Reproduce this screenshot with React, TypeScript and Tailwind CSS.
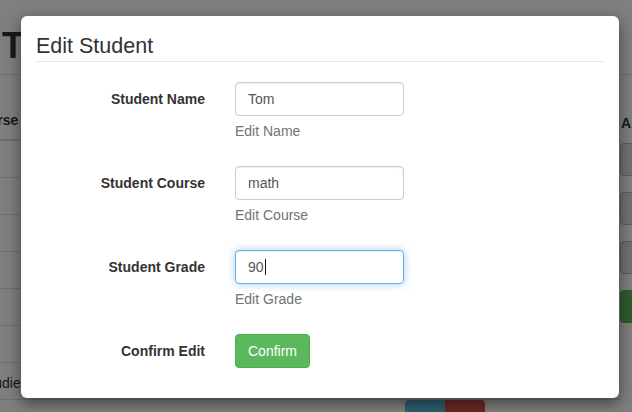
import React from "react";

interface FieldRow {
  label: string;
  value: string;
  help: string;
  focused?: boolean;
}

const fields: FieldRow[] = [
  { label: "Student Name", value: "Tom", help: "Edit Name" },
  { label: "Student Course", value: "math", help: "Edit Course" },
  { label: "Student Grade", value: "90", help: "Edit Grade", focused: true },
];

function FakeInput({ value, focused }: { value: string; focused?: boolean }) {
  return (
    <div
      className={
        focused
          ? "flex h-[34px] items-center rounded-[4px] border border-[#66afe9] bg-white px-[12px] text-[#555] shadow-[inset_0_1px_1px_rgba(0,0,0,0.075),0_0_8px_rgba(102,175,233,0.6)]"
          : "flex h-[34px] items-center rounded-[4px] border border-[#ccc] bg-white px-[12px] text-[#555] shadow-[inset_0_1px_1px_rgba(0,0,0,0.075)]"
      }
    >
      <span>{value}</span>
      {focused && <span className="ml-[1px] inline-block h-[16px] w-px bg-[#111]" />}
    </div>
  );
}

export default function App() {
  return (
    <div className="relative h-[412px] w-[632px] overflow-hidden bg-white font-['Liberation_Sans',Arial,sans-serif] text-[14px] text-[#333]">
      {/* page behind the modal */}
      <div className="flex flex-col">
        <h1 className="pl-[2px] pt-[26px] text-[36px] font-bold leading-[40px]">Top</h1>
        <div className="mt-[8px] border-t border-[#ddd]" />
        <div className="flex">
          <div className="w-[620px] shrink-0">
            <div className="flex h-[66px] items-end border-b-2 border-[#ddd] pb-[9px] font-bold leading-[20px]">
              <span className="ml-[-30px]">Course</span>
            </div>
            <div className="h-[37px] border-b border-[#ddd]" />
            <div className="h-[37px] border-b border-[#ddd]" />
            <div className="h-[37px] border-b border-[#ddd]" />
            <div className="h-[37px] border-b border-[#ddd]" />
            <div className="h-[37px] border-b border-[#ddd]" />
            <div className="h-[37px] border-b border-[#ddd]" />
            <div className="flex h-[37px] items-center border-b border-[#ddd] pt-[4px]">
              <span className="ml-[-19px]">Studies</span>
            </div>
            <div className="flex pl-[405px]">
              <div className="h-[34px] w-[40px] rounded-l-[4px] bg-[#5bc0de]" />
              <div className="h-[34px] w-[40px] rounded-r-[4px] bg-[#d9534f]" />
            </div>
          </div>
          <div className="flex w-[80px] shrink-0 flex-col pt-[38px]">
            <span className="ml-[1px] font-bold leading-[20px]">A</span>
            <div className="mt-[10px] flex flex-col gap-[16px]">
              <div className="h-[33px] rounded-[4px] border border-[#bbb] bg-[#e0e0e0]" />
              <div className="h-[33px] rounded-[4px] border border-[#bbb] bg-[#e0e0e0]" />
              <div className="h-[33px] rounded-[4px] border border-[#bbb] bg-[#e0e0e0]" />
              <div className="h-[33px] rounded-[4px] bg-[#5cb85c]" />
            </div>
          </div>
        </div>
      </div>

      {/* backdrop */}
      <div className="absolute inset-0 bg-black/50" />

      {/* modal */}
      <div className="absolute left-[21px] top-[16px] w-[598px] rounded-[6px] bg-white shadow-[0_5px_15px_rgba(0,0,0,0.5)]">
        <div className="mx-[15px] border-b border-[#e5e5e5] pb-[3px] pt-[18px]">
          <h4 className="text-[21.5px] leading-[24px] text-[#333]">Edit Student</h4>
        </div>
        <div className="flex flex-col gap-[15px] px-[15px] pb-[30px] pt-[20px]">
          {fields.map((f) => (
            <div key={f.label} className="flex gap-[30px]">
              <label className="flex h-[34px] w-[169px] items-center justify-end font-bold">{f.label}</label>
              <div className="w-[169px]">
                <FakeInput value={f.value} focused={f.focused} />
                <p className="mb-[10px] mt-[5px] leading-[20px] text-[#737373]">{f.help}</p>
              </div>
            </div>
          ))}
          <div className="flex gap-[30px]">
            <label className="flex h-[34px] w-[169px] items-center justify-end font-bold">Confirm Edit</label>
            <div>
              <button className="h-[34px] rounded-[4px] border border-[#4cae4c] bg-[#5cb85c] px-[12px] leading-[20px] text-white">
                Confirm
              </button>
            </div>
          </div>
        </div>
      </div>
    </div>
  );
}
